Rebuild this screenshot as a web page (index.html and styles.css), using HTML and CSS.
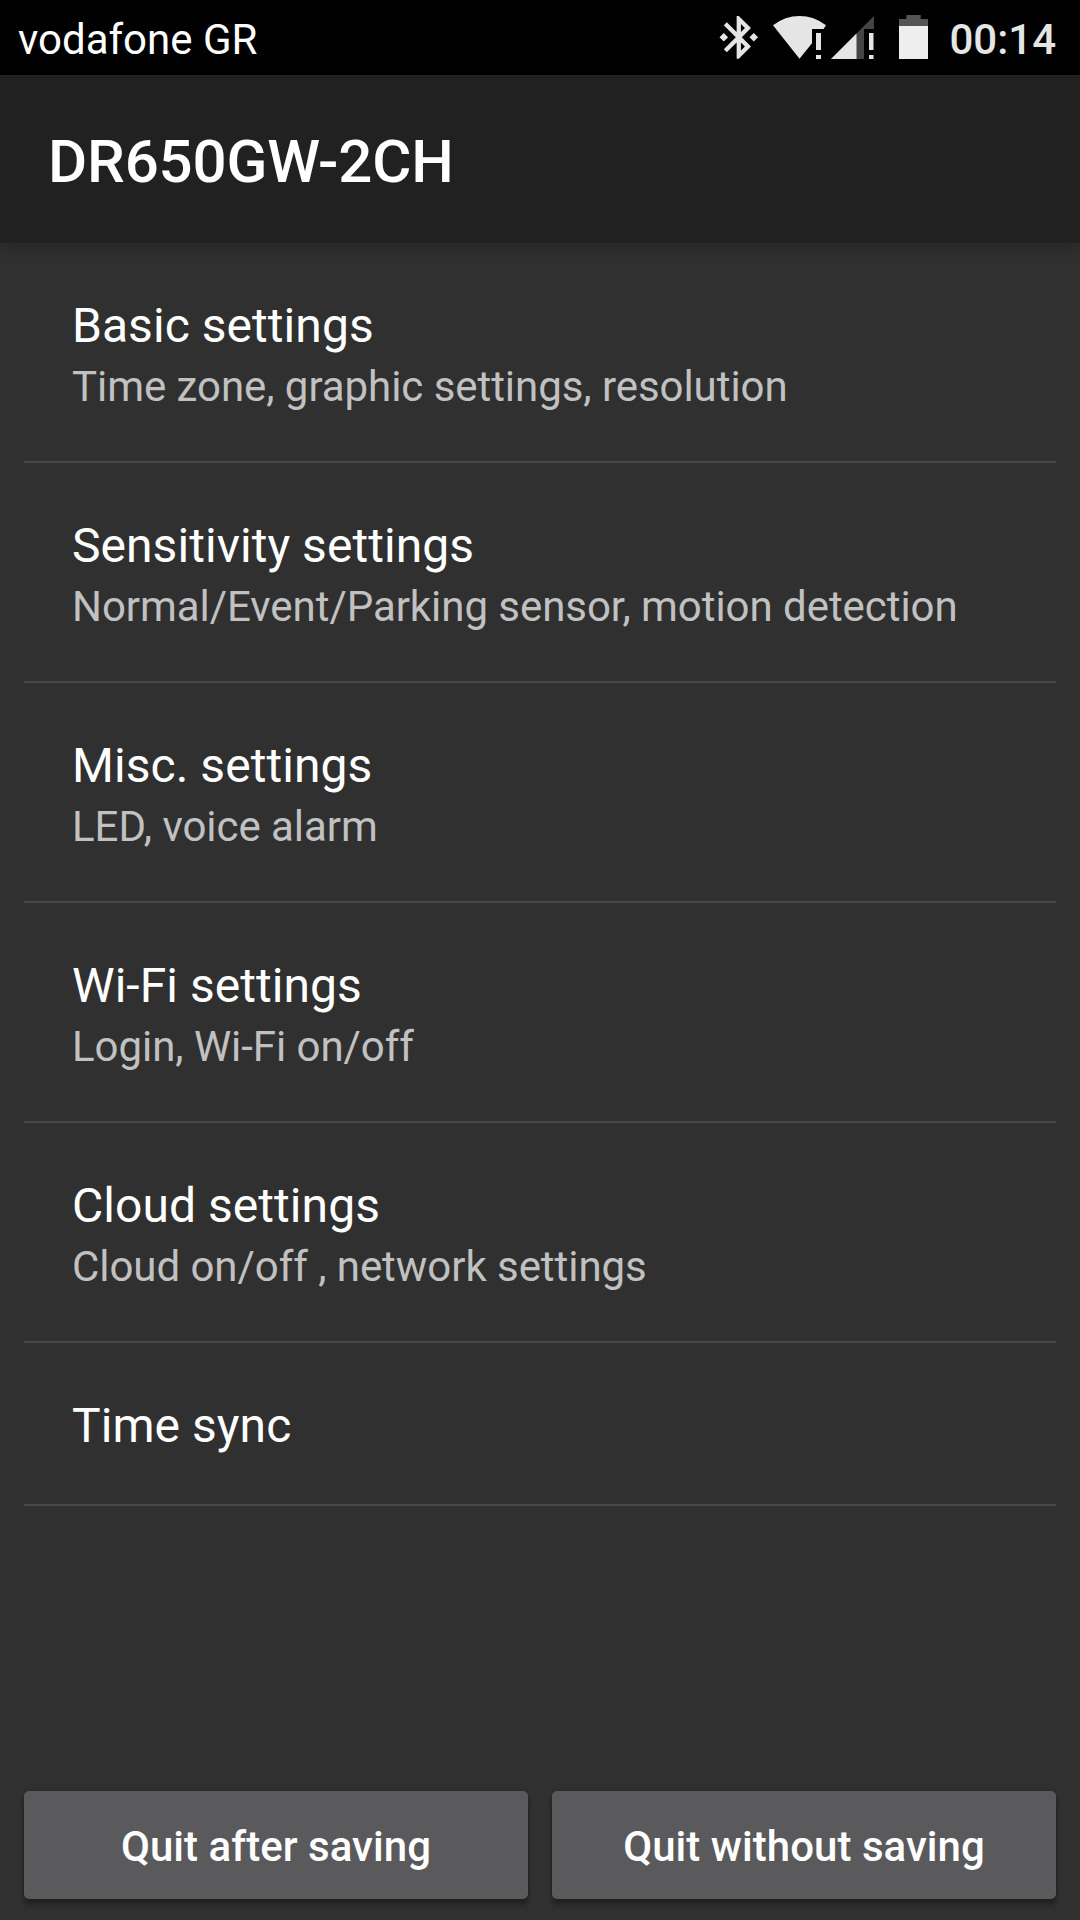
FILE: index.html
```html
<!DOCTYPE html>
<html lang="en">

<head>
  <meta charset="UTF-8">
  <meta name="viewport" content="width=device-width, initial-scale=1.0">
  <title>DR650GW-2CH</title>
  <link rel="stylesheet" href="styles.css">
</head>

<body>
  <div class="statusbar">
    <span class="carrier">vodafone GR</span>
    <svg class="status-icons" width="230" height="75" viewBox="700 0 230 75">
      <!-- bluetooth -->
      <path transform="translate(713.1 11.6) scale(2.14)" fill="#e5e5e5" d="M7 12l-2-2-2 2 2 2 2-2zm10.71-4.29L12 2h-1v7.59L6.41 5 5 6.41 10.59 12 5 17.59 6.41 19 11 14.41V22h1l5.71-5.71-4.3-4.29 4.3-4.29zM13 5.83l1.88 1.88L13 9.59V5.83zm1.88 10.46L13 18.17v-3.76l1.88 1.88zM19 10l-2 2 2 2 2-2-2-2z"/>
      <!-- wifi -->
      <path d="M773 25.3Q785 16 799.5 16T826 25.3L823.5 29H812V43.3L799.5 58.7Z" fill="#e5e5e5"/>
      <path d="M816 33h5v17h-5zM816 55h5v4h-5z" fill="#e5e5e5"/>
      <!-- signal -->
      <path d="M831 59L874 16V29H864V59Z" fill="#444"/>
      <path d="M831 59L856.5 33.5V59Z" fill="#e5e5e5"/>
      <path d="M869 33h4.5v17H869zM869 55h4.5v4H869z" fill="#e5e5e5"/>
      <!-- battery -->
      <path d="M899 19h7.3v-4h14.4v4h7.3v7h-29z" fill="#555"/>
      <path d="M899 26h29v33h-29z" fill="#eee"/>
    </svg>
    <span class="clock">00:14</span>
  </div>
  <header>
    <h1>DR650GW-2CH</h1>
  </header>
  <main>
    <ul class="settings">
      <li>
        <h2>Basic settings</h2>
        <p>Time zone, graphic settings, resolution</p>
      </li>
      <li>
        <h2>Sensitivity settings</h2>
        <p>Normal/Event/Parking sensor, motion detection</p>
      </li>
      <li>
        <h2>Misc. settings</h2>
        <p>LED, voice alarm</p>
      </li>
      <li>
        <h2>Wi-Fi settings</h2>
        <p>Login, Wi-Fi on/off</p>
      </li>
      <li>
        <h2>Cloud settings</h2>
        <p>Cloud on/off , network settings</p>
      </li>
      <li>
        <h2>Time sync</h2>
      </li>
    </ul>
  </main>
  <footer>
    <button>Quit after saving</button>
    <button>Quit without saving</button>
  </footer>
</body>

</html>
```

FILE: styles.css
```css
*,
*::before,
*::after {
  box-sizing: border-box;
}
body {
  display: flex;
  flex-flow: column;
  height: 1920px;
  margin: 0;
  overflow: hidden;
  background: #303030;
  color: #fff;
  font-family: Roboto, "Liberation Sans", sans-serif;
}
h1,
h2,
p {
  margin: 0;
}
.statusbar {
  display: flex;
  align-items: center;
  flex: none;
  height: 75px;
  padding: 0 24px 0 18px;
  background: #000;
}
.carrier {
  margin-right: auto;
  padding-top: 4px;
  font-size: 42px;
}
.clock {
  padding-top: 4px;
  margin-left: 19px;
  color: #e5e5e5;
  font-size: 42px;
  font-weight: 500;
}
header {
  display: flex;
  align-items: center;
  flex: none;
  height: 168px;
  padding: 4px 48px 0;
  background: #212121;
  box-shadow: 0 6px 12px rgba(0, 0, 0, .2);
}
h1 {
  font-size: 60px;
  font-weight: 500;
  letter-spacing: -.15px;
}
main {
  flex: 1;
  padding: 0 24px;
}
.settings {
  margin: 0;
  padding: 0;
  list-style: none;
}
.settings li {
  height: 220px;
  padding: 54px 48px 0;
  border-bottom: 2px solid #484848;
}
.settings li:last-child {
  height: 163px;
}
h2 {
  font-size: 48px;
  font-weight: 400;
  line-height: 57px;
  letter-spacing: .05px;
}
p {
  padding-top: 8px;
  color: #c1c1c1;
  font-size: 42px;
  line-height: 49px;
  letter-spacing: -.05px;
}
footer {
  display: flex;
  flex: none;
  gap: 24px;
  padding: 0 24px 21px;
}
button {
  flex: 1;
  height: 108px;
  padding: 2px 0 0;
  border: 0;
  border-radius: 5px;
  background: #5a5a5c;
  box-shadow: 0 6px 5px rgba(0, 0, 0, .28), 0 0 3px rgba(0, 0, 0, .25);
  color: #fff;
  font: 500 42px Roboto, "Liberation Sans", sans-serif;
  letter-spacing: .04px;
}
```
